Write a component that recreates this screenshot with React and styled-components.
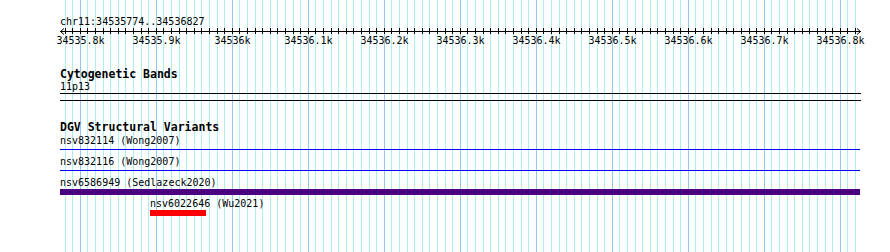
import React from "react";
import styled, { createGlobalStyle } from "styled-components";

const VIEW_START = 34535774;
const VIEW_END = 34536827;
const PX_PER_BP = 0.76;
const VIEW_WIDTH = 801;

const toX = bp => (bp - VIEW_START) * PX_PER_BP;

const gridPositions = (() => {
    const out = [];
    for (let bp = Math.ceil(VIEW_START / 10) * 10; bp <= VIEW_END; bp += 10) {
        out.push({ bp, x: Math.round(toX(bp)), major: bp % 100 === 0 });
    }
    return out;
})();

const formatK = bp => {
    const k = bp / 1000;
    return (Number.isInteger(k) ? k.toString() : k.toFixed(1)) + "k";
};

const features = [
    { name: "nsv832114", source: "Wong2007", start: VIEW_START, end: VIEW_END, kind: "line", color: "#0000ff" },
    { name: "nsv832116", source: "Wong2007", start: VIEW_START, end: VIEW_END, kind: "line", color: "#0000ff" },
    { name: "nsv6586949", source: "Sedlazeck2020", start: VIEW_START, end: VIEW_END, kind: "bar", color: "#4b0082" },
    { name: "nsv6022646", source: "Wu2021", start: 34535893, end: 34535966, kind: "bar", color: "#ff0000" }
];

const GlobalStyle = createGlobalStyle`
  html, body {
    margin: 0;
    padding: 0;
    background: #ffffff;
  }
  body {
    font-family: "DejaVu Sans Mono", "Liberation Mono", monospace;
    color: #000000;
  }
`;

const Page = styled.div`
  position: relative;
  width: 890px;
  height: 252px;
  overflow: hidden;
`;

const Grid = styled.div`
  position: absolute;
  top: 0;
  bottom: 0;
  left: 60px;
  width: ${VIEW_WIDTH}px;
  z-index: 0;
`;

const GridLine = styled.div`
  position: absolute;
  top: 0;
  bottom: 0;
  width: 1px;
  background: ${p => (p.$major ? "#92c8ea" : "#aeeeee")};
`;

const Content = styled.div`
  position: relative;
  z-index: 1;
  margin-left: 60px;
  width: ${VIEW_WIDTH}px;
  padding-top: 16px;
`;

const Locus = styled.div`
  font-size: 10px;
  line-height: 12px;
  height: 12px;
  white-space: nowrap;
`;

const Scale = styled.div`
  position: relative;
  height: 20px;
`;

const ScaleSvg = styled.svg`
  position: absolute;
  top: 0;
  left: -1px;
  overflow: visible;
`;

const TickLabel = styled.span`
  position: absolute;
  top: 7px;
  font-size: 10px;
  line-height: 12px;
  white-space: nowrap;
  transform: translateX(-50%);
`;

const Track = styled.section`
  margin-top: ${p => p.$gap}px;
`;

const TrackLabel = styled.div`
  font-size: 11.5px;
  font-weight: bold;
  line-height: 13px;
  height: 13px;
  white-space: nowrap;
`;

const BandName = styled.div`
  font-size: 10px;
  line-height: 12px;
  height: 12px;
`;

const Band = styled.div`
  height: 6px;
  border-top: 1px solid #000000;
  border-bottom: 1px solid #000000;
`;

const Rows = styled.div`
  margin-top: 1px;
`;

const FeatureRow = styled.div`
  height: 21px;
`;

const FeatureLabel = styled.div`
  font-size: 10px;
  line-height: 12px;
  height: 12px;
  white-space: nowrap;
`;

const FeatureBox = styled.div`
  position: relative;
  height: 6px;
`;

const FeatureLine = styled.div`
  margin-top: 2px;
  height: 1px;
  background: ${p => p.$color};
`;

const FeatureBar = styled.div`
  height: 6px;
  background: ${p => p.$color};
`;

const Ruler = () => (
    <Scale>
        <ScaleSvg width={VIEW_WIDTH + 2} height={10} shapeRendering="crispEdges">
            <line x1={1} y1={3.5} x2={VIEW_WIDTH + 1} y2={3.5} stroke="#000" strokeWidth={1} />
            <polyline points="5,0.5 1.5,3.5 5,6.5" fill="none" stroke="#000" strokeWidth={1} shapeRendering="auto" />
            <polyline
                points={`${VIEW_WIDTH - 3},0.5 ${VIEW_WIDTH + 0.5},3.5 ${VIEW_WIDTH - 3},6.5`}
                fill="none"
                stroke="#000"
                strokeWidth={1}
                shapeRendering="auto"
            />
            {gridPositions.map(g => (
                <line key={g.bp} x1={g.x + 1.5} y1={0} x2={g.x + 1.5} y2={6} stroke="#000" strokeWidth={1} />
            ))}
        </ScaleSvg>
        {gridPositions
            .filter(g => g.major)
            .map(g => (
                <TickLabel key={g.bp} style={{ left: g.x + 0.5 }}>
                    {formatK(g.bp)}
                </TickLabel>
            ))}
    </Scale>
);

export default function App() {
    return (
        <Page>
            <GlobalStyle />
            <Grid>
                {gridPositions.map(g => (
                    <GridLine key={g.bp} $major={g.major} style={{ left: g.x }} />
                ))}
            </Grid>
            <Content>
                <Locus>chr11:34535774..34536827</Locus>
                <Ruler />
                <Track $gap={20}>
                    <TrackLabel>Cytogenetic Bands</TrackLabel>
                    <BandName>11p13</BandName>
                    <Band />
                </Track>
                <Track $gap={20}>
                    <TrackLabel>DGV Structural Variants</TrackLabel>
                    <Rows>
                        {features.map(f => {
                            const left = Math.round(toX(f.start));
                            const width = Math.round(toX(f.end)) - left;
                            return (
                                <FeatureRow key={f.name}>
                                    <FeatureLabel style={{ paddingLeft: left }}>
                                        {f.name} ({f.source})
                                    </FeatureLabel>
                                    <FeatureBox style={{ marginLeft: left, width }}>
                                        {f.kind === "line" ? (
                                            <FeatureLine $color={f.color} />
                                        ) : (
                                            <FeatureBar $color={f.color} />
                                        )}
                                    </FeatureBox>
                                </FeatureRow>
                            );
                        })}
                    </Rows>
                </Track>
            </Content>
        </Page>
    );
}
